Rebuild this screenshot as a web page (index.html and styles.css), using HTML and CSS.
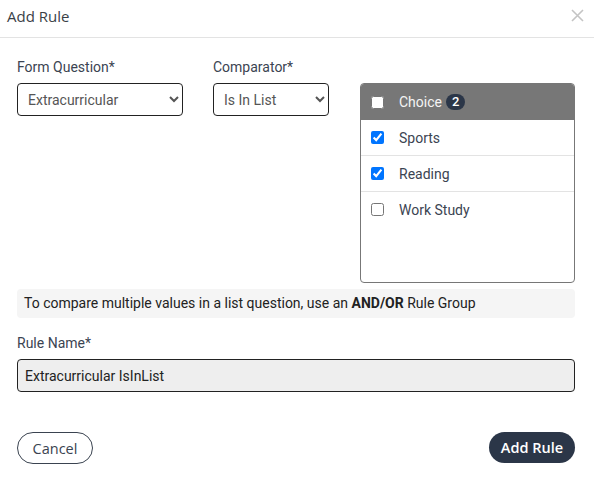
FILE: index.html
```html
<!DOCTYPE html>
<html lang="en">
<head>
    <meta charset="UTF-8">
    <meta name="viewport" content="width=device-width, initial-scale=1.0">
    <title>Add Rule</title>
    <link rel="stylesheet" href="styles.css">
</head>
<body>
    <div class="modal">
        <header class="modal-header">
            <h2>Add Rule</h2>
            <button class="close-btn" aria-label="Close">
                <svg width="13" height="13" viewBox="0 0 13 13">
                    <path d="M1 1 L12 12 M12 1 L1 12" stroke="#c4c4c4" stroke-width="1.6" fill="none"/>
                </svg>
            </button>
        </header>

        <div class="modal-body">
            <div class="rule-row">
                <div class="field question-field">
                    <label for="question">Form Question*</label>
                    <select id="question">
                        <option>Extracurricular</option>
                    </select>
                </div>

                <div class="field comparator-field">
                    <label for="comparator">Comparator*</label>
                    <select id="comparator">
                        <option>Is In List</option>
                    </select>
                </div>

                <div class="choice-list">
                    <div class="choice-head">
                        <input type="checkbox">
                        <span>Choice</span>
                        <span class="badge">2</span>
                    </div>
                    <div class="choice-item">
                        <input type="checkbox" id="sports" checked>
                        <label for="sports">Sports</label>
                    </div>
                    <div class="choice-item">
                        <input type="checkbox" id="reading" checked>
                        <label for="reading">Reading</label>
                    </div>
                    <div class="choice-item no-border">
                        <input type="checkbox" id="work-study">
                        <label for="work-study">Work Study</label>
                    </div>
                </div>
            </div>

            <div class="hint">
                To compare multiple values in a list question, use an <strong>AND/OR</strong> Rule Group
            </div>

            <div class="field name-field">
                <label for="rule-name">Rule Name*</label>
                <input type="text" id="rule-name" value="Extracurricular IsInList">
            </div>
        </div>

        <footer class="modal-footer">
            <button class="cancel-btn">Cancel</button>
            <button class="submit-btn">Add Rule</button>
        </footer>
    </div>
</body>
</html>
```

FILE: styles.css
```css
:root {
    --navy: #2b3648;
    --text: #3b4452;
    --border: #222222;
    --line: #e3e3e3;
}

body {
    margin: 0;
    font-family: 'Roboto', sans-serif;
    font-size: 14px;
    color: var(--text);
    background: #ffffff;
}

.modal {
    width: 594px;
}

.modal-header {
    display: flex;
    align-items: center;
    justify-content: space-between;
    height: 37px;
    padding: 0 10px 0 7px;
    border-bottom: 1px solid var(--line);
}

.modal-header h2 {
    margin: 0 0 6px;
    font-family: 'Open Sans', sans-serif;
    font-size: 15px;
    font-weight: 400;
    color: #3a3f47;
}

.close-btn {
    background: none;
    border: none;
    padding: 0;
    margin-bottom: 6px;
    display: flex;
    cursor: pointer;
}

.modal-body {
    padding: 21px 19px 0 17px;
}

.rule-row {
    display: flex;
}

.field {
    display: flex;
    flex-direction: column;
}

.field label {
    line-height: 16px;
    margin-bottom: 8px;
}

.question-field {
    width: 166px;
    margin-right: 30px;
}

.comparator-field {
    width: 116px;
    margin-right: 31px;
}

select {
    height: 33px;
    border: 1px solid var(--border);
    border-radius: 4px;
    padding: 0 6px;
    font-family: 'Roboto', sans-serif;
    font-size: 14px;
    color: #555555;
    background: #ffffff;
}

.choice-list {
    flex: 1;
    margin-top: 24px;
    height: 198px;
    border: 1px solid #777777;
    border-radius: 4px;
    overflow: hidden;
}

.choice-head {
    display: flex;
    align-items: center;
    height: 36px;
    background: #777777;
    color: #f4f4f4;
    padding-left: 10px;
}

.choice-head input {
    margin: 0 15px 0 0;
}

.badge {
    margin-left: 4px;
    background: var(--navy);
    color: #ffffff;
    font-size: 13px;
    font-weight: 500;
    border-radius: 8px;
    padding: 0 6px;
    line-height: 16px;
}

.choice-item {
    display: flex;
    align-items: center;
    height: 35px;
    padding-left: 10px;
    border-bottom: 1px solid var(--line);
}

.choice-item.no-border {
    border-bottom: none;
}

.choice-list input[type="checkbox"] {
    width: 13px;
    height: 13px;
    margin: 0 15px 0 0;
}

.hint {
    margin-top: 6px;
    height: 29px;
    line-height: 29px;
    padding-left: 7px;
    background: #f5f5f5;
    border-radius: 4px;
    color: #222222;
}

.hint strong {
    font-weight: 700;
}

.name-field {
    margin-top: 17px;
}

.name-field input {
    height: 31px;
    border: 1px solid var(--border);
    border-radius: 4px;
    padding: 0 7px;
    background: #eeeeee;
    font-family: 'Roboto', sans-serif;
    font-size: 14px;
    color: #222222;
}

.modal-footer {
    display: flex;
    justify-content: space-between;
    padding: 40px 19px 0 17px;
}

.cancel-btn,
.submit-btn {
    font-family: 'Open Sans', sans-serif;
    font-size: 14.5px;
    height: 32px;
    border-radius: 16px;
    cursor: pointer;
}

.cancel-btn {
    width: 76px;
    background: #ffffff;
    border: 1px solid #3a4350;
    color: #3a4350;
}

.submit-btn {
    width: 86px;
    height: 31px;
    background: var(--navy);
    border: none;
    color: #ffffff;
    font-weight: 600;
}
```
